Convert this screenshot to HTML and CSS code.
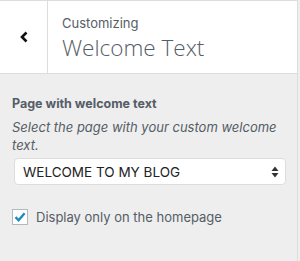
FILE: index.html
```html
<!DOCTYPE html>
<html>
<head>
<meta charset="utf-8">
<link rel="stylesheet" href="styles.css">
</head>
<body>
<div class="panel">
  <header class="head">
    <button class="back" aria-label="Back">
      <svg width="12" height="14" viewBox="0 0 12 14"><path d="M8.5 2.5 L4 7 L8.5 11.5" fill="none" stroke="#111" stroke-width="2.6" stroke-linecap="butt"/></svg>
    </button>
    <div class="titles">
      <span class="crumb">Customizing</span>
      <h1 class="title">Welcome Text</h1>
    </div>
  </header>
  <section class="control">
    <h2 class="label">Page with welcome text</h2>
    <p class="desc">Select the page with your custom welcome text.</p>
    <div class="select">
      <span class="select-val">WELCOME TO MY BLOG</span>
      <svg class="arrows" width="8" height="12" viewBox="0 0 8 12"><path d="M4 0.5 L7.5 5 L0.5 5 Z M0.5 7 L7.5 7 L4 11.5 Z" fill="#333"/></svg>
    </div>
    <label class="check">
      <span class="box"><svg width="14" height="14" viewBox="0 0 14 14"><path d="M2.5 7.2 L5.6 10.2 L11.6 3.2" fill="none" stroke="#1e8cbe" stroke-width="2.4"/></svg></span>
      <span class="check-text">Display only on the homepage</span>
    </label>
  </section>
</div>
</body>
</html>
```
FILE: styles.css
```css
html, body {
  margin: 0;
  padding: 0;
  background: #eeeeee;
}
body {
  font-family: Inter, "Open Sans", "Liberation Sans", sans-serif;
  color: #555d66;
  width: 300px;
  height: 261px;
  overflow: hidden;
}
.panel {
  width: 298px;
  height: 261px;
  border-right: 1px solid #dddddd;
  border-top: 1px solid #dddddd;
  box-sizing: border-box;
  background: #eeeeee;
}
.head {
  display: flex;
  height: 73px;
  background: #ffffff;
  border-bottom: 1px solid #dddddd;
  box-sizing: border-box;
}
.back {
  width: 48px;
  border: 0;
  border-right: 1px solid #dddddd;
  background: #ffffff;
  padding: 0;
  display: flex;
  align-items: center;
  justify-content: center;
  flex-shrink: 0;
}
.titles {
  display: flex;
  flex-direction: column;
  padding: 14px 0 0 14px;
}
.crumb {
  font-size: 13px;
  line-height: 16px;
  color: #555d66;
}
.title {
  margin: 3px 0 0;
  font-family: "Open Sans", Inter, sans-serif;
  font-size: 22.5px;
  font-weight: 300;
  line-height: 28px;
  color: #555d66;
}
.control {
  padding: 21px 12px 0 12px;
}
.label {
  margin: 0;
  font-size: 12.5px;
  font-weight: 700;
  line-height: 18px;
}
.desc {
  margin: 5px 0 0;
  font-size: 13px;
  font-style: italic;
  line-height: 18px;
}
.select {
  margin: 4px 0 0 2px;
  width: 272px;
  height: 27px;
  box-sizing: border-box;
  background: #ffffff;
  border: 1px solid #dddddd;
  border-radius: 4px;
  display: flex;
  align-items: center;
  justify-content: space-between;
  padding: 0 6px 0 8px;
}
.select-val {
  font-size: 13.5px;
  color: #222;
}
.check {
  display: flex;
  align-items: center;
  margin-top: 24px;
  gap: 8px;
}
.box {
  width: 16px;
  height: 16px;
  box-sizing: border-box;
  border: 1px solid #b4b9be;
  background: #fff;
  display: flex;
  align-items: center;
  justify-content: center;
}
.check-text {
  font-size: 13px;
  color: #555d66;
}
```
